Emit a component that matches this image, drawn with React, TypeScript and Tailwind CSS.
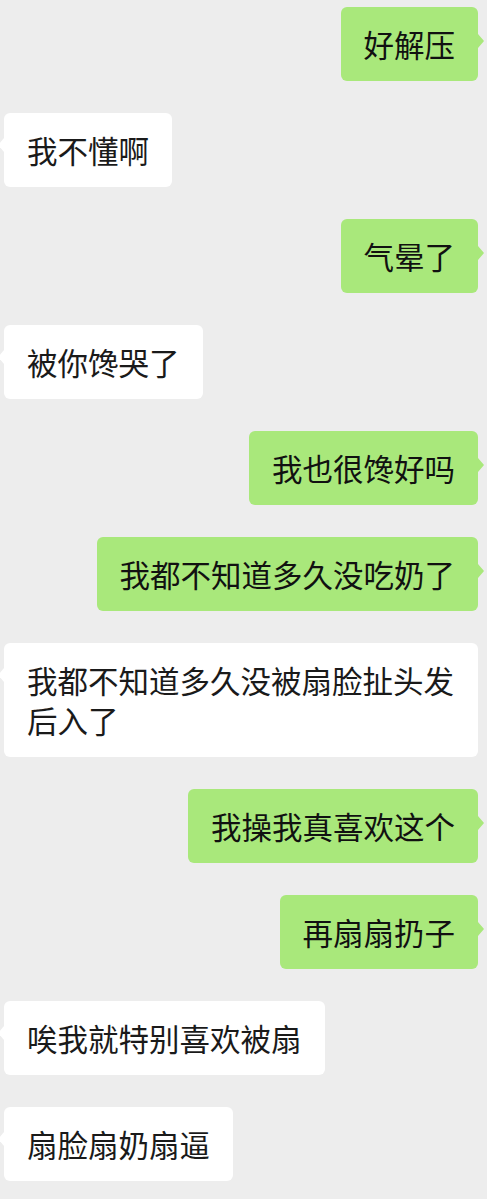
import React from "react";

type Msg = { me: boolean; text: string };

const messages: Msg[] = [
  { me: true, text: "好解压" },
  { me: false, text: "我不懂啊" },
  { me: true, text: "气晕了" },
  { me: false, text: "被你馋哭了" },
  { me: true, text: "我也很馋好吗" },
  { me: true, text: "我都不知道多久没吃奶了" },
  { me: false, text: "我都不知道多久没被扇脸扯头发后入了" },
  { me: true, text: "我操我真喜欢这个" },
  { me: true, text: "再扇扇扔子" },
  { me: false, text: "唉我就特别喜欢被扇" },
  { me: false, text: "扇脸扇奶扇逼" },
];

function Bubble({ me, text }: Msg) {
  return (
    <div className={me ? "flex justify-end pr-[9px]" : "flex justify-start pl-[4px]"}>
      <div
        className={
          "relative max-w-[474px] rounded-[6px] px-[23px] py-[17px] text-[30.5px] leading-[40px] " +
          (me ? "bg-[#a9e87b] text-[#111111]" : "bg-white text-[#1a1a1a]")
        }
      >
        {text}
        {me ? (
          <span className="absolute left-full top-[27px] h-0 w-0 border-y-[7px] border-l-[6px] border-y-transparent border-l-[#a9e87b]" />
        ) : (
          <span className="absolute right-full top-[25px] h-0 w-0 border-y-[7px] border-r-[6px] border-y-transparent border-r-white" />
        )}
      </div>
    </div>
  );
}

export default function App() {
  return (
    <div
      className="min-h-[1199px] w-full overflow-hidden bg-[#ededed] pt-[7px]"
      style={{ fontFamily: '"Noto Sans CJK SC", "Noto Sans", sans-serif' }}
    >
      <div className="flex flex-col gap-[32px]">
        {messages.map((m, i) => (
          <Bubble key={i} me={m.me} text={m.text} />
        ))}
      </div>
    </div>
  );
}
